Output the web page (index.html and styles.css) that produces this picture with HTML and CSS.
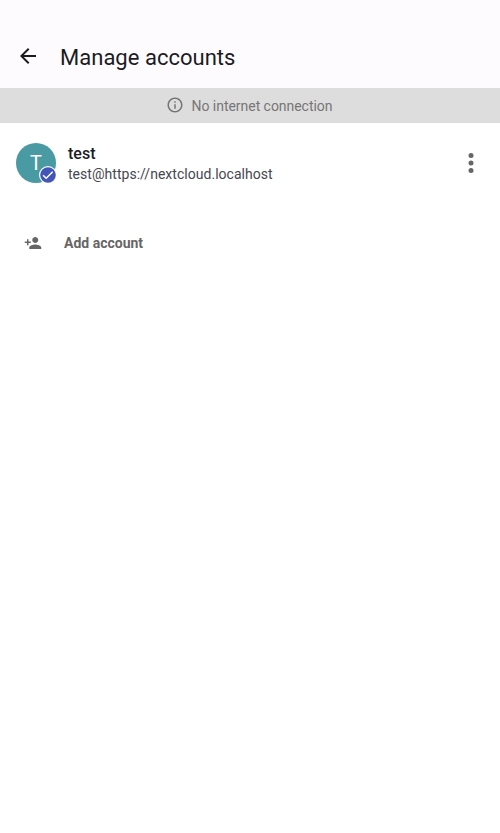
FILE: index.html
```html
<!DOCTYPE html>
<html lang="en">
<head>
<meta charset="utf-8">
<title>Manage accounts</title>
<link rel="stylesheet" href="styles.css">
</head>
<body>
<header class="toolbar">
  <svg class="back" viewBox="0 0 24 24"><path d="M20 11H7.83l5.59-5.59L12 4l-8 8 8 8 1.41-1.41L7.83 13H20v-2z"/></svg>
  <h1 class="title">Manage accounts</h1>
</header>
<div class="banner">
  <svg class="info" viewBox="0 0 24 24"><path d="M11 7h2v2h-2zm0 4h2v6h-2zm1-9C6.48 2 2 6.48 2 12s4.48 10 10 10 10-4.48 10-10S17.52 2 12 2zm0 18c-4.41 0-8-3.59-8-8s3.59-8 8-8 8 3.59 8 8-3.59 8-8 8z"/></svg>
  <span class="banner-text">No internet connection</span>
</div>
<main>
  <div class="account">
    <div class="avatar"><span class="initial">T</span>
      <svg class="badge" viewBox="0 0 18 18"><circle cx="9" cy="9" r="9" fill="#fff"/><circle cx="9" cy="9" r="7.8" fill="#4355b9"/><path d="M4.1 9.2l3.1 3.1 6.5-6.5" fill="none" stroke="#fff" stroke-width="1.5"/></svg>
    </div>
    <div class="details">
      <div class="name">test</div>
      <div class="address">test@https://nextcloud.localhost</div>
    </div>
    <svg class="more" viewBox="0 0 30 30"><circle cx="15" cy="7.5" r="2.5"/><circle cx="15" cy="15" r="2.5"/><circle cx="15" cy="22.5" r="2.5"/></svg>
  </div>
  <div class="add">
    <svg class="add-icon" viewBox="0 0 24 24"><path d="M15 12c2.21 0 4-1.79 4-4s-1.79-4-4-4-4 1.79-4 4 1.79 4 4 4zm-9-2V7H4v3H1v2h3v3h2v-3h3v-2H6zm9 4c-2.67 0-8 1.34-8 4v2h16v-2c0-2.66-5.33-4-8-4z"/></svg>
    <span class="add-text">Add account</span>
  </div>
</main>
</body>
</html>
```
FILE: styles.css
```css
* { box-sizing: border-box; }
body { margin: 0; min-height: 833px; background: #fff; font-family: Roboto, sans-serif; }
svg { display: block; flex: none; }
.toolbar { height: 88px; padding: 24px 16px 0; display: flex; align-items: center; background: #fefbff; }
.back { width: 24px; height: 24px; fill: #1b1b1f; }
.title { margin: 3px 0 0 20px; font-size: 22px; font-weight: 400; line-height: 28px; letter-spacing: 0.02px; color: #1b1b1f; }
.banner { height: 35px; padding-right: 2px; display: flex; align-items: center; justify-content: center; gap: 8px; background: #ddd; color: #767676; }
.info { width: 18px; height: 18px; margin-bottom: 2px; fill: #767676; }
.banner-text { font-size: 14px; line-height: 18px; letter-spacing: -0.04px; }
.account { height: 80px; padding: 0 14px 0 16px; display: flex; align-items: center; }
.avatar { position: relative; width: 40px; height: 40px; border-radius: 50%; background: #499aa2; color: #fff; display: flex; align-items: center; justify-content: center; font-size: 20px; }
.badge { position: absolute; width: 18px; height: 18px; left: 23px; top: 23px; }
.details { margin-left: 12px; flex: 1; }
.name { font-size: 16px; font-weight: 500; line-height: 21px; color: #1b1b1f; }
.address { font-size: 14px; line-height: 20px; letter-spacing: 0.03px; color: #46464f; }
.more { width: 30px; height: 30px; fill: #666; }
.add { height: 80px; padding-left: 24px; display: flex; align-items: center; gap: 22px; color: #666; }
.add-icon { width: 18px; height: 18px; fill: #666; }
.add-text { font-size: 14px; font-weight: 700; line-height: 20px; }
```
